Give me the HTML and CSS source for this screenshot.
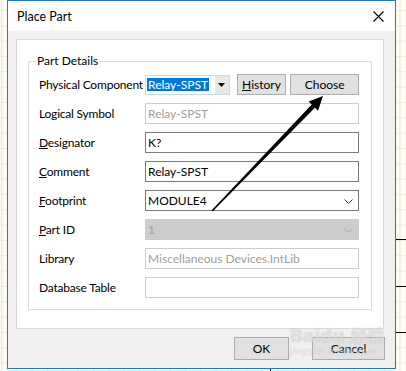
FILE: index.html
```html
<!DOCTYPE html>
<html lang="en">
<head>
    <meta charset="UTF-8">
    <title>Place Part</title>
    <link rel="stylesheet" href="styles.css">
</head>
<body>
    <div class="dialog">
        <div class="titlebar">
            <span class="title">Place Part</span>
            <svg class="close" width="11" height="11" viewBox="0 0 11 11">
                <path d="M0.5 0.5 L10.5 10.5 M10.5 0.5 L0.5 10.5" stroke="#000" stroke-width="1.1" fill="none"/>
            </svg>
        </div>
        <div class="content">
            <div class="panel">
                <div class="group">
                    <span class="legend">Part Details</span>
                    <div class="rows">
                        <span class="label">Physical Component</span>
                        <div class="combo-row">
                            <div class="combo">
                                <span class="selected">Relay-SPST</span>
                                <span class="drop"><svg width="7" height="4" viewBox="0 0 7 4"><path d="M0 0 H7 L3.5 4 Z" fill="#000"/></svg></span>
                            </div>
                            <button class="btn history"><u>H</u>istory</button>
                            <button class="btn choose">Choose</button>
                        </div>

                        <span class="label">Logical Symbol</span>
                        <div class="field readonly">Relay-SPST</div>

                        <span class="label"><u>D</u>esignator</span>
                        <div class="field">K?</div>

                        <span class="label"><u>C</u>omment</span>
                        <div class="field">Relay-SPST</div>

                        <span class="label"><u>F</u>ootprint</span>
                        <div class="field select">MODULE4
                            <svg class="chevron" width="9" height="5" viewBox="0 0 9 5"><path d="M0.5 0.5 L4.5 4.5 L8.5 0.5" stroke="#333" fill="none"/></svg>
                        </div>

                        <span class="label"><u>P</u>art ID</span>
                        <div class="field select disabled">1
                            <svg class="chevron" width="9" height="5" viewBox="0 0 9 5"><path d="M0.5 0.5 L4.5 4.5 L8.5 0.5" stroke="#a8a8a8" fill="none"/></svg>
                        </div>

                        <span class="label">Library</span>
                        <div class="field readonly">Miscellaneous Devices.IntLib</div>

                        <span class="label">Database Table</span>
                        <div class="field readonly"></div>
                    </div>
                </div>
            </div>
            <div class="actions">
                <button class="btn ok">OK</button>
                <button class="btn cancel">Cancel</button>
            </div>
        </div>
    </div>

    <div class="watermark">
        <span class="wm-big">Bai<b>du</b> 经验</span>
        <span class="wm-small">jingyan.baidu.com</span>
    </div>

    <span class="tick tick-1"></span>
    <span class="tick tick-2"></span>
    <span class="tick tick-3"></span>
    <span class="tick-v"></span>

    <svg class="arrow" width="406" height="371" viewBox="0 0 406 371">
        <polygon points="212.6,211.6 314.9,107.7 318,110.8 323,96 308.6,101.4 311.7,104.5 211.4,210.4" fill="#000"/>
    </svg>
</body>
</html>
```

FILE: styles.css
```css
body {
    margin: 0;
    width: 406px;
    height: 371px;
    overflow: hidden;
    position: relative;
    font-family: Lato, "Noto Sans", sans-serif;
    font-size: 12px;
    color: #000;
    background-color: #fdfaf2;
    background-image:
        linear-gradient(to right, #efe9dc 1px, transparent 1px),
        linear-gradient(to bottom, #efe9dc 1px, transparent 1px);
    background-size: 15.33px 15.33px;
    background-position: 1px 10px;
}
.dialog {
    margin-left: 7px;
    width: 387px;
    height: 367px;
    border: 1px solid #1a7fd4;
    background: #f0f0f0;
    display: flex;
    flex-direction: column;
}
.titlebar {
    flex-shrink: 0;
    height: 30px;
    background: #fff;
    display: flex;
    align-items: center;
    justify-content: space-between;
    padding: 0 10px 0 9px;
}
.title {
    font-size: 12.5px;
    margin-top: 1px;
}
.close {
    margin-right: 1px;
}
.content {
    padding: 8px 11px 0 8px;
}
.panel {
    box-sizing: border-box;
    background: #fff;
    border: 1px solid #d9d9d9;
    height: 290px;
    padding: 21px 11px 0 11px;
}
.group {
    position: relative;
    border: 1px solid #dcdcdc;
    padding: 12px 12px 11px 10px;
}
.legend {
    position: absolute;
    top: -10px;
    left: 6px;
    padding: 0 2px;
    background: #fff;
    line-height: 18px;
}
.rows {
    display: grid;
    grid-template-columns: 106px 214px;
    grid-auto-rows: 21px;
    row-gap: 8px;
    align-items: center;
}
.label {
    line-height: 21px;
    white-space: nowrap;
    letter-spacing: -0.2px;
}
.combo-row {
    display: flex;
    align-items: center;
    height: 21px;
}
.combo {
    width: 82px;
    height: 18px;
    border: 1px solid #c5dcf2;
    background: #fff;
    display: flex;
    align-items: center;
    padding-left: 1px;
}
.selected {
    background: #0078d7;
    color: #fff;
    line-height: 13px;
    padding: 0 1px;
}
.drop {
    margin-left: auto;
    width: 14px;
    height: 18px;
    background: #e8e8e8;
    display: flex;
    align-items: center;
    justify-content: center;
}
.btn {
    font-family: inherit;
    font-size: 12px;
    color: #000;
    background: #e1e1e1;
    border: 1px solid #adadad;
    padding: 0;
    height: 21px;
}
.history {
    width: 50px;
    margin-left: 7px;
}
.choose {
    width: 69px;
    margin-left: 4px;
}
.field {
    box-sizing: border-box;
    height: 21px;
    border: 1px solid #7a7a7a;
    background: #fff;
    padding-left: 2px;
    line-height: 19px;
    position: relative;
}
.field.readonly {
    border-color: #cccccc;
    color: #a0a0a0;
}
.field.disabled {
    border-color: #cccccc;
    background: #cccccc;
    color: #a0a0a0;
}
.chevron {
    position: absolute;
    right: 5px;
    top: 8px;
}
.actions {
    display: flex;
    justify-content: flex-end;
    gap: 23px;
    padding-top: 8px;
    margin-right: -1px;
}
.ok {
    width: 55px;
    height: 23px;
}
.cancel {
    width: 73px;
    height: 23px;
}
.watermark {
    position: absolute;
    left: 290px;
    top: 326px;
    display: flex;
    flex-direction: column;
    color: rgba(255, 255, 255, 0.55);
    text-shadow: 0 0 1px rgba(120, 120, 120, 0.45);
    pointer-events: none;
}
.wm-big {
    font-family: "DejaVu Sans", "Noto Sans CJK SC", sans-serif;
    font-size: 17px;
    font-weight: bold;
    line-height: 20px;
}
.wm-small {
    font-size: 9px;
    line-height: 10px;
    letter-spacing: 1px;
}
.tick {
    position: absolute;
    left: 396px;
    width: 10px;
    height: 1px;
    background: #000;
}
.tick-1 { top: 239px; }
.tick-2 { top: 286px; }
.tick-3 { top: 332px; }
.tick-v {
    position: absolute;
    left: 270px;
    top: 369px;
    width: 1px;
    height: 2px;
    background: #000;
}
.arrow {
    position: absolute;
    left: 0;
    top: 0;
    pointer-events: none;
}
```
